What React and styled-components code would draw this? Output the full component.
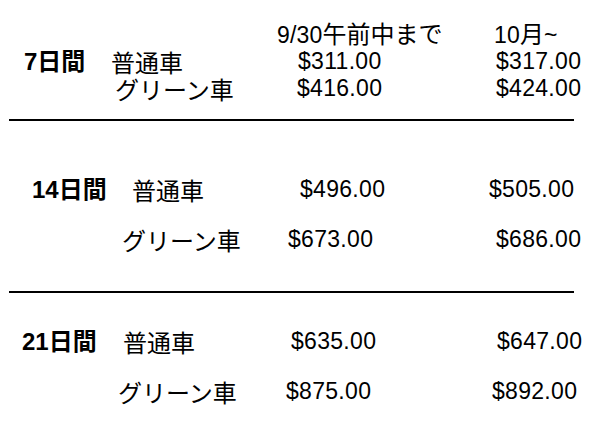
import React from "react";
import styled, { createGlobalStyle } from "styled-components";

const Global = createGlobalStyle`
  html, body { margin: 0; padding: 0; background: #fff; }
  body {
    font-family: "Liberation Sans", Arial, "Noto Sans CJK JP", sans-serif;
    color: #000;
  }
`;

const Page = styled.div`
  width: 597px;
  height: 423px;
  overflow: hidden;
  display: flex;
  flex-direction: column;
`;

const Row = styled.div`
  display: grid;
  grid-template-columns: 105px 170px 205px 1fr;
  height: 27px;
  line-height: 27px;
  font-size: 23px;
  white-space: nowrap;
  margin-top: ${(p) => p.$mt}px;
`;

const Cell = styled.div`
  padding-left: ${(p) => p.$x || 0}px;
  grid-column: ${(p) => p.$col};
`;

const Days = styled(Cell)`
  font-size: 24px;
  font-weight: bold;
`;

const Label = styled(Cell)`
  font-size: 24px;
  font-family: "Noto Sans CJK JP", sans-serif;
`;

const Price = styled(Cell)`
  letter-spacing: 0.3px;
`;

const Header = styled(Cell)`
  letter-spacing: 0.2px;
`;

const Jp = styled.span`
  font-size: 24px;
  letter-spacing: 0;
  font-family: "Noto Sans CJK JP", sans-serif;
`;

const Divider = styled.hr`
  margin: ${(p) => p.$mt}px 0 0 9px;
  width: 565px;
  height: 2px;
  border: none;
  background: #000;
  flex: none;
`;

const sections = [
  {
    days: "7日間",
    dx: 24,
    rows: [
      { label: "普通車", lx: 6, p1: "$311.00", x1: 23, p2: "$317.00", x2: 16, mt: 2, days: true },
      { label: "グリーン車", lx: 10, p1: "$416.00", x1: 22, p2: "$424.00", x2: 16, mt: 0 },
    ],
  },
  {
    days: "14日間",
    dx: 32,
    rows: [
      { label: "普通車", lx: 27, p1: "$496.00", x1: 25, p2: "$505.00", x2: 9, mt: 55, days: true },
      { label: "グリーン車", lx: 17, p1: "$673.00", x1: 13, p2: "$686.00", x2: 16, mt: 23 },
    ],
  },
  {
    days: "21日間",
    dx: 22,
    rows: [
      { label: "普通車", lx: 18, p1: "$635.00", x1: 16, p2: "$647.00", x2: 17, mt: 35, days: true },
      { label: "グリーン車", lx: 13, p1: "$875.00", x1: 11, p2: "$892.00", x2: 12, mt: 23 },
    ],
  },
];

const dividerMargins = [17, 38];

export default function App() {
  return (
    <>
      <Global />
      <Page>
        <Row $mt={19}>
          <Header $col={3} $x={2}>
            9/30<Jp>午前中まで</Jp>
          </Header>
          <Header $col={4} $x={14}>
            10<Jp>月</Jp>~
          </Header>
        </Row>
        {sections.map((s, si) => (
          <React.Fragment key={s.days}>
            {s.rows.map((r) => (
              <Row key={r.label} $mt={r.mt}>
                {r.days && (
                  <Days $col={1} $x={s.dx}>
                    {s.days}
                  </Days>
                )}
                <Label $col={2} $x={r.lx}>
                  {r.label}
                </Label>
                <Price $col={3} $x={r.x1}>
                  {r.p1}
                </Price>
                <Price $col={4} $x={r.x2}>
                  {r.p2}
                </Price>
              </Row>
            ))}
            {si < dividerMargins.length && <Divider $mt={dividerMargins[si]} />}
          </React.Fragment>
        ))}
      </Page>
    </>
  );
}
